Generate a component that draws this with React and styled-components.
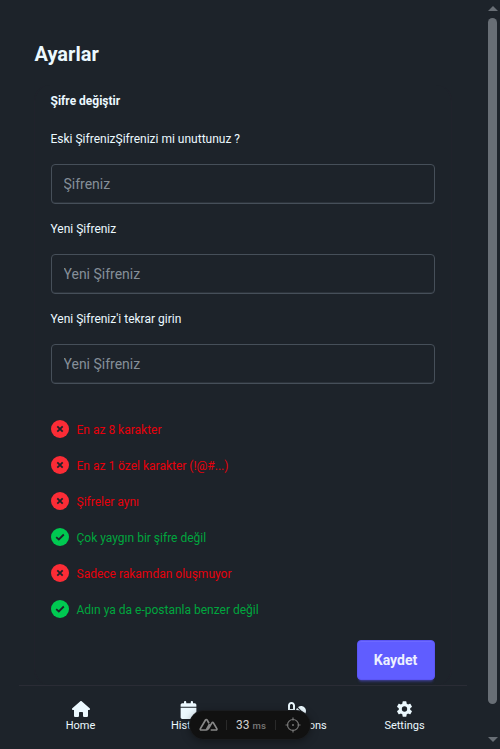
import React from "react";
import styled, { createGlobalStyle } from "styled-components";
import { FaHouse, FaCalendar, FaPills } from "react-icons/fa6";
import { IoSettingsSharp } from "react-icons/io5";

const GlobalStyle = createGlobalStyle`
  * { box-sizing: border-box; }
  body {
    margin: 0;
    background: #1d232a;
    color: #ecf9ff;
    font-family: Roboto, sans-serif;
    overflow: hidden;
  }
  h1, h2 { margin: 0; }
`;

const Page = styled.div`
  position: relative;
  display: grid;
  grid-template-columns: 1fr 15px;
  width: 500px;
  height: 749px;
  overflow: hidden;
`;

const Content = styled.main`
  display: flex;
  flex-direction: column;
  height: 749px;
`;

const Title = styled.h1`
  padding: 40px 0 0 34.5px;
  height: 85px;
  font-size: 20px;
  line-height: 28px;
  font-weight: 700;
`;

const Card = styled.form`
  display: flex;
  flex-direction: column;
  flex: none;
  width: 418px;
  height: 600px;
  margin-left: 33.5px;
  padding: 8px 16px 0;
  border: solid #20222b;
  border-width: 0 1px;
  border-radius: 16px;
`;

const CardTitle = styled.h2`
  height: 38px;
  font-size: 12px;
  line-height: 16px;
  font-weight: 700;
`;

const Field = styled.label`
  display: flex;
  flex-direction: column;
  gap: 17px;
  height: 90px;
  font-size: 12px;
  line-height: 16px;
`;

const Input = styled.input`
  width: 384px;
  height: 40px;
  flex: none;
  padding: 0 12px;
  border: 1px solid #464f59;
  border-radius: 4px;
  background: #1d232a;
  box-shadow: inset 0 -1px #2b323a;
  color: #ecf9ff;
  font: 14px Roboto, sans-serif;
  outline: none;
  &::placeholder { color: #858f99; opacity: 1; }
`;

const Rules = styled.ul`
  display: flex;
  flex-direction: column;
  margin: 10px 0 0;
  padding: 0;
  list-style: none;
`;

const Rule = styled.li`
  display: flex;
  align-items: center;
  gap: 8px;
  height: 36px;
  font-size: 12px;
  line-height: 16px;
  color: ${(p) => (p.$ok ? "#00a63e" : "#e7000b")};
  svg { display: block; flex: none; }
  span { padding-top: 1px; }
`;

const SaveButton = styled.button`
  align-self: flex-end;
  width: 78px;
  height: 40px;
  margin-top: 13px;
  padding: 0;
  border: 1px solid #5b55f4;
  border-radius: 4px;
  background: #605dff;
  box-shadow: inset 0 1px #6c69ff, 0 3px 2px -2px #605dff50, 0 4px 3px -2px #605dff40;
  color: #edf1fe;
  font: 700 14px Roboto, sans-serif;
`;

const NavBar = styled.nav`
  display: grid;
  grid-template-columns: repeat(4, 1fr);
  width: 448px;
  height: 64px;
  margin-left: 18.5px;
  padding: 0 8px;
  border-top: 1px solid #2a2c35;
`;

const NavItem = styled.a`
  display: flex;
  flex-direction: column;
  align-items: center;
  padding-top: 14px;
  font-size: 11px;
  line-height: 14px;
  svg { display: block; height: 18px; margin-bottom: 1px; }
`;

const CalendarIcon = styled(FaCalendar)`
  position: relative;
  top: 1px;
`;

const Scrollbar = styled.div`
  display: flex;
  flex-direction: column;
  align-items: center;
  padding: 6px 0 0;
`;

const Thumb = styled.div`
  width: 9px;
  height: 686px;
  margin: 7px 0 33px;
  border-radius: 5px;
  background: #686e75;
`;

const Arrow = styled.div`
  width: 0;
  height: 0;
  border: solid transparent;
  border-width: ${(p) => (p.$down ? "5px 5px 0" : "0 5px 5px")};
  border-${(p) => (p.$down ? "top" : "bottom")}-color: #686e75;
`;

const DevTools = styled.div`
  position: absolute;
  left: 190px;
  top: 711px;
  display: flex;
  align-items: center;
  width: 120px;
  height: 28px;
  padding: 0 9px;
  border-radius: 14px;
  background: #111;
  box-shadow: 0 0 0 1px #1a1c1f, 0 2px 10px #0006;
  color: #888;
  svg { display: block; flex: none; }
`;

const Divider = styled.i`
  width: 1px;
  height: 10px;
  background: #2a2a2a;
`;

const Timing = styled.div`
  display: flex;
  align-items: baseline;
  justify-content: center;
  gap: 3px;
  width: 48px;
  font-size: 12px;
  color: #d0d0d0;
  small { font-size: 9.6px; font-weight: 500; color: #777; }
`;

const NuxtIcon = styled.svg`
  margin-right: 7px;
`;

const TargetIcon = styled.svg`
  margin-left: 9px;
`;

function StatusIcon({ ok }) {
  return (
    <svg width="18" height="18" viewBox="0 0 18 18">
      <circle cx="9" cy="9" r="9" fill={ok ? "#00c951" : "#fb2c36"} />
      <path
        d={ok ? "M5.2 9.1 7.8 11.4 12.8 6.5" : "M6.3 6.3 11.7 11.7M11.7 6.3 6.3 11.7"}
        fill="none"
        stroke="#1d232a"
        strokeWidth="1.8"
      />
    </svg>
  );
}

const rules = [
  ["En az 8 karakter", false],
  ["En az 1 özel karakter (!@#...)", false],
  ["Şifreler aynı", false],
  ["Çok yaygın bir şifre değil", true],
  ["Sadece rakamdan oluşmuyor", false],
  ["Adın ya da e-postanla benzer değil", true],
];

const fields = [
  ["Eski ŞifrenizŞifrenizi mi unuttunuz ?", "Şifreniz"],
  ["Yeni Şifreniz", "Yeni Şifreniz"],
  ["Yeni Şifreniz'i tekrar girin", "Yeni Şifreniz"],
];

export default function App() {
  return (
    <Page>
      <GlobalStyle />
      <Content>
        <Title>Ayarlar</Title>
        <Card>
          <CardTitle>Şifre değiştir</CardTitle>
          {fields.map(([label, placeholder]) => (
            <Field key={label}>
              {label}
              <Input type="password" placeholder={placeholder} />
            </Field>
          ))}
          <Rules>
            {rules.map(([text, ok]) => (
              <Rule key={text} $ok={ok}>
                <StatusIcon ok={ok} />
                <span>{text}</span>
              </Rule>
            ))}
          </Rules>
          <SaveButton type="button">Kaydet</SaveButton>
        </Card>
        <NavBar>
          <NavItem><FaHouse size={18} />Home</NavItem>
          <NavItem><CalendarIcon size={17} />History</NavItem>
          <NavItem><FaPills size={18} />Medications</NavItem>
          <NavItem><IoSettingsSharp size={17} />Settings</NavItem>
        </NavBar>
      </Content>
      <Scrollbar>
        <Arrow />
        <Thumb />
        <Arrow $down />
      </Scrollbar>
      <DevTools>
        <NuxtIcon width="20" height="14" viewBox="0 0 20 14" fill="none" stroke="#888" strokeWidth="1.7" strokeLinejoin="round">
          <path d="M7.3 12H2.2c-.8 0-1.2-.7-.8-1.4L6.5 2c.4-.7 1.2-.7 1.6 0L10 5.2M7.3 12c1 0 1.6-.5 2.2-1.4l3.4-5.7c.4-.6 1.1-.6 1.5 0l3.4 5.7c.4.7 0 1.4-.8 1.4h-5.3M7.3 12 10.6 6" />
        </NuxtIcon>
        <Divider />
        <Timing>33 <small>ms</small></Timing>
        <Divider />
        <TargetIcon width="16" height="16" viewBox="0 0 16 16" fill="none" stroke="#777" strokeWidth="1.2">
          <circle cx="8" cy="8" r="5.5" />
          <path d="M8 .5v3M8 12.5v3M.5 8h3M12.5 8h3" />
          <circle cx="8" cy="8" r="1" fill="#777" stroke="none" />
        </TargetIcon>
      </DevTools>
    </Page>
  );
}
